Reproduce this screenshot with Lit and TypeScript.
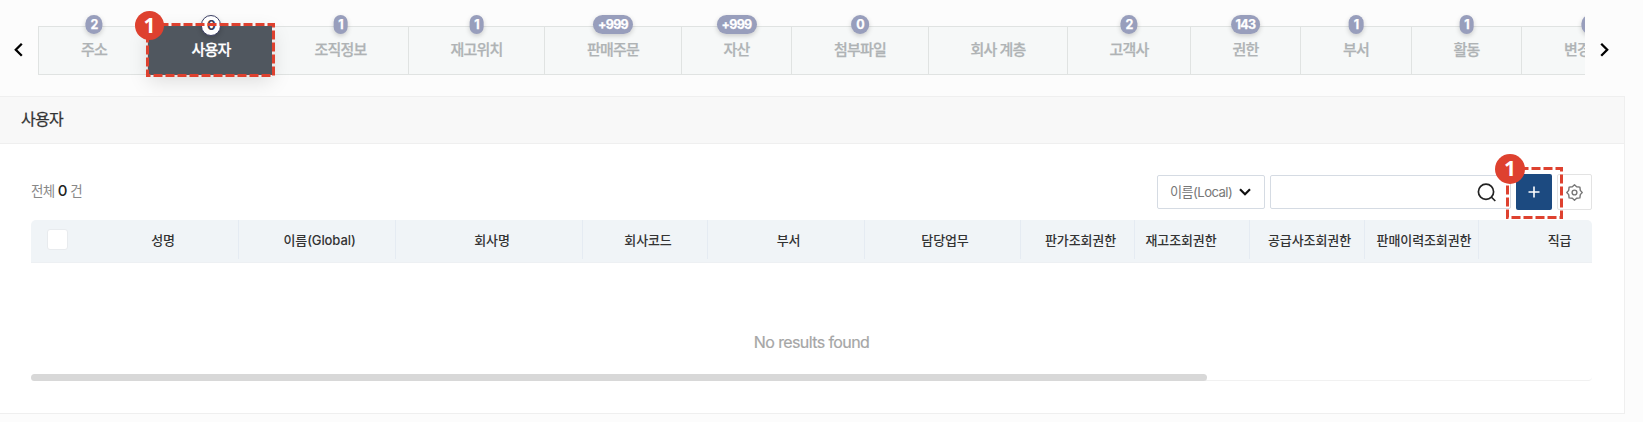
import { LitElement, html, css, svg } from "lit";
import { customElement } from "lit/decorators.js";
import { classMap } from "lit/directives/class-map.js";
import { styleMap } from "lit/directives/style-map.js";

interface Tab { label: string; count?: string; width: number; active?: boolean; shift?: number; }
interface Column { label: string; width: number; shift: number; }

const TABS: Tab[] = [
  { label: "주소", count: "2", width: 110, shift: 2 },
  { label: "사용자", count: "0", width: 124, active: true, shift: 3 },
  { label: "조직정보", count: "1", width: 137, shift: 1 },
  { label: "재고위치", count: "1", width: 136 },
  { label: "판매주문", count: "+999", width: 137 },
  { label: "자산", count: "+999", width: 110 },
  { label: "첨부파일", count: "0", width: 137 },
  { label: "회사 계층", width: 139 },
  { label: "고객사", count: "2", width: 123 },
  { label: "권한", count: "143", width: 110 },
  { label: "부서", count: "1", width: 111 },
  { label: "활동", count: "1", width: 110 },
  { label: "변경이력", count: "2", width: 137 },
];

const COLUMNS: Column[] = [
  { label: "성명", width: 154, shift: 3 },
  { label: "이름(Global)", width: 157, shift: 5 },
  { label: "회사명", width: 187, shift: 6 },
  { label: "회사코드", width: 125, shift: 6 },
  { label: "부서", width: 157, shift: 5 },
  { label: "담당업무", width: 156, shift: 5 },
  { label: "판가조회권한", width: 114, shift: 6 },
  { label: "재고조회권한", width: 115, shift: -22 },
  { label: "공급사조회권한", width: 115, shift: 5 },
  { label: "판매이력조회권한", width: 114, shift: 5 },
  { label: "직급", width: 157, shift: 5 },
];

@customElement("app-root")
export class AppRoot extends LitElement {
  static styles = css`
    :host {
      display: flex;
      flex-direction: column;
      position: relative;
      box-sizing: border-box;
      height: 422px;
      width: 1643px;
      overflow: hidden;
      background: #fcfcfc;
      color: #333;
      font-family: Inter, "Noto Sans CJK KR", sans-serif;
    }
    * { box-sizing: border-box; }
    .nav { display: flex; height: 96px; flex: none; }
    .arrow { width: 38px; padding: 42px 0 0 13px; flex: none; }
    .arrow.next { width: 58px; padding-left: 14px; }
    .arrow svg, .icon { display: block; }
    .strip { display: flex; width: 1547px; flex: none; overflow: hidden; padding-top: 26px; }
    .tab {
      position: relative;
      flex: none;
      height: 49px;
      border: 1px solid #e0e3e2;
      border-left: 0;
      background: #f6f8f8;
      color: #afb3b5;
      font-size: 15px;
      font-weight: 500;
      letter-spacing: -0.8px;
      line-height: 20px;
      padding-top: 13px;
      text-align: center;
      white-space: nowrap;
      -webkit-text-stroke: 0.25px currentColor;
    }
    .tab:first-child { border-left: 1px solid #e0e3e2; }
    .tab.active {
      background: #50575f;
      border-color: #50575f;
      color: #fff;
      box-shadow: 0 6px 20px rgba(0, 0, 0, 0.13);
      z-index: 1;
    }
    .count {
      position: absolute;
      left: 50%;
      top: -12px;
      transform: translateX(-50%);
      height: 19px;
      padding: 0 5px;
      border-radius: 10px;
      background: #989ebc;
      color: #fff;
      font-size: 12.5px;
      font-weight: 700;
      line-height: 19px;
      letter-spacing: -0.7px;
      box-shadow: 0 2px 5px rgba(0, 0, 0, 0.18);
    }
    .active .count {
      background: #fff;
      color: #3c4058;
      border: 1px solid #3c4065;
      height: 21px;
      font-size: 13px;
      -webkit-text-stroke: 0;
    }
    .panel {
      width: 1625px;
      height: 318px;
      border: 1px solid #efefef;
      border-left: 0;
      background: #fff;
    }
    .title {
      height: 47px;
      padding-left: 21px;
      border-bottom: 1px solid #efefef;
      background: #f8f8f8;
      font-size: 16px;
      letter-spacing: -0.7px;
      line-height: 44px;
      -webkit-text-stroke: 0.25px currentColor;
    }
    .body { padding: 30px 32px 0 31px; }
    .toolbar { display: flex; height: 36px; align-items: center; }
    .total { flex: 1; font-size: 13.5px; letter-spacing: -0.6px; color: #888; padding-bottom: 4px; }
    .total b { font-size: 15px; font-weight: 500; color: #222; }
    .select, .search {
      display: flex;
      align-items: center;
      height: 34px;
      border: 1px solid #d5dbe3;
      border-radius: 2px;
      background: #fff;
    }
    .select { width: 108px; margin-right: 5px; padding: 0 13px 0 12px; justify-content: space-between; font-size: 13.2px; letter-spacing: -0.6px; color: #777; white-space: nowrap; }
    .select span { padding-bottom: 2px; }
    .search { width: 241px; margin-right: 5px; justify-content: flex-end; padding-right: 14px; }
    .add, .config { display: flex; align-items: center; justify-content: center; height: 36px; border-radius: 2px; }
    .add { width: 36px; margin-right: 5px; background: #1c4a80; }
    .config { width: 35px; border: 1px solid #e3e3e3; background: #fff; }
    .grid { margin-top: 10px; width: 1561px; overflow: hidden; }
    .head {
      display: flex;
      height: 43px;
      background: #f0f4f7;
      border-bottom: 1px solid #edf0f3;
      border-radius: 5px 5px 0 0;
      overflow: hidden;
    }
    .check { flex: none; width: 54px; padding: 9px 0 0 16px; }
    .box { width: 21px; height: 21px; border: 1px solid #e8ebee; border-radius: 3px; background: #fff; }
    .cell {
      flex: none;
      height: 39px;
      border-right: 1px solid #e5ebf2;
      font-size: 13px;
      font-weight: 500;
      line-height: 41px;
      letter-spacing: -0.1px;
      text-align: center;
      white-space: nowrap;
    }
    .empty { height: 111px; padding-top: 69px; text-align: center; font-size: 16px; letter-spacing: -0.6px; line-height: 20px; color: #a6a6a6; -webkit-text-stroke: 0.2px currentColor; }
    .rail { height: 7px; border-bottom: 1px solid #f1f1f1; border-radius: 0 0 4px 4px; }
    .thumb { width: 1176px; height: 7px; border-radius: 4px; background: #d8d8d8; }
    .mark { position: absolute; z-index: 3; }
    .mark-tab { left: 146px; top: 23px; }
    .mark-add { left: 1506px; top: 167px; }
    .pin {
      position: absolute;
      z-index: 4;
      width: 29px;
      height: 29px;
      border-radius: 50%;
      background: #de412f;
      color: #fff;
      font: 700 21px/29px "Noto Sans", sans-serif;
      text-align: center;
    }
    .pin-tab { left: 135px; top: 11px; }
    .pin-add { left: 1495px; top: 154px; width: 30px; height: 30px; }
  `;

  private chevron(dir: "prev" | "next") {
    return html`<svg width="12" height="16" viewBox="0 0 12 16" fill="none" stroke="#000" stroke-width="2.3">
      ${dir === "prev" ? svg`<path d="M8.8 1.7 2.8 7.7l6 6" />` : svg`<path d="M2.2 1.7l6 6-6 6" />`}
    </svg>`;
  }

  private dashes(w: number, h: number, cls: string) {
    return html`<svg class="mark ${cls}" width=${w} height=${h} fill="none" stroke="#de412f" stroke-width="3" stroke-dasharray="9 3">
      <rect x="1.5" y="1.5" width=${w - 3} height=${h - 3} />
    </svg>`;
  }

  render() {
    return html`
      <nav class="nav">
        <div class="arrow">${this.chevron("prev")}</div>
        <div class="strip">
          ${TABS.map((t) => html`
            <div class=${classMap({ tab: true, active: !!t.active })} style=${styleMap({ width: `${t.width}px`, paddingLeft: `${t.shift ?? 0}px` })}>
              ${t.count ? html`<span class="count" style=${styleMap({ marginLeft: `${(t.shift ?? 0) / 2}px` })}>${t.count}</span>` : ""}${t.label}
            </div>`)}
        </div>
        <div class="arrow next">${this.chevron("next")}</div>
      </nav>
      <section class="panel">
        <div class="title">사용자</div>
        <div class="body">
          <div class="toolbar">
            <div class="total">전체 <b>0</b> 건</div>
            <div class="select"><span>이름(Local)</span>
              <svg class="icon" width="12" height="8" viewBox="0 0 12 8" fill="none" stroke="#111" stroke-width="2.2"><path d="M1 1.2l5 5 5-5" /></svg>
            </div>
            <div class="search">
              <svg class="icon" width="19" height="19" viewBox="0 0 19 19" fill="none" stroke="#222" stroke-width="1.7"><circle cx="9" cy="8.7" r="7.6" /><path d="M14.3 14l4 4" /></svg>
            </div>
            <div class="add">
              <svg class="icon" width="12" height="12" viewBox="0 0 12 12" stroke="#fff" stroke-width="1.6"><path d="M6 .5v11M.5 6h11" /></svg>
            </div>
            <div class="config">
              <svg class="icon" width="17" height="17" viewBox="0 0 17 17" fill="none" stroke="#777" stroke-width="1.4" stroke-linejoin="round"><path d="M8.5.8l2.100 1.900 3.300.4.4 3.300 1.900 2.100-1.900 2.100-.4 3.300-3.300.4-2.100 1.900-2.100-1.900-3.300-.4-.4-3.300L.8 8.500l1.900-2.100.4-3.300 3.300-.4z" /><circle cx="8.5" cy="8.5" r="2.4" /></svg>
            </div>
          </div>
          <div class="grid">
            <div class="head">
              <div class="check"><div class="box"></div></div>
              ${COLUMNS.map((c) => html`<div class="cell" style=${styleMap({
                width: `${c.width}px`,
                paddingLeft: `${Math.max(c.shift, 0)}px`,
                paddingRight: `${Math.max(-c.shift, 0)}px`,
              })}>${c.label}</div>`)}
            </div>
            <div class="empty">No results found</div>
            <div class="rail"><div class="thumb"></div></div>
          </div>
        </div>
      </section>
      ${this.dashes(129, 54, "mark-tab")}
      ${this.dashes(57, 52, "mark-add")}
      <div class="pin pin-tab">1</div>
      <div class="pin pin-add">1</div>
    `;
  }
}
